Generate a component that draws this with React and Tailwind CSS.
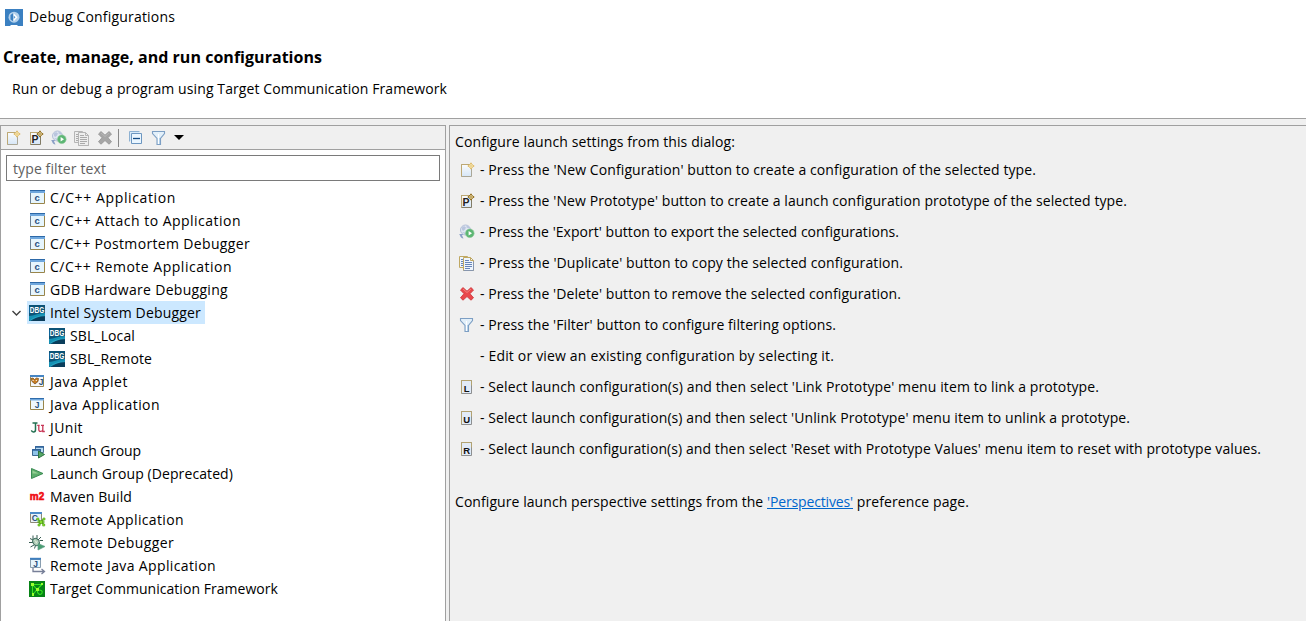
import { useLayoutEffect, useRef, useState } from "react";

/* Text whose tracking is adjusted so that it fills a given width. */
function Fit({ w, children, className = "" }) {
  const ref = useRef(null);
  const [ls, setLs] = useState(0);
  useLayoutEffect(() => {
    const natural = ref.current.getBoundingClientRect().width;
    setLs((w - natural) / ref.current.textContent.length);
  }, []);
  return (
    <span ref={ref} className={"inline-block whitespace-pre " + className} style={{ letterSpacing: ls + "px" }}>
      {children}
    </span>
  );
}

function Svg({ children, box = "0 0 16 16" }) {
  return (
    <svg viewBox={box} className="block h-4 w-4 shrink-0 overflow-visible">
      {children}
    </svg>
  );
}

const G = ({ children, size = 9, x = 8, y = 12, fill = "#222" }) => (
  <text x={x} y={y} fontSize={size} fill={fill} fontWeight={700} textAnchor="middle" fontFamily="Liberation Sans, sans-serif">
    {children}
  </text>
);

function Spark({ dark }) {
  const c = dark ? "#8a6414" : "#dcb866";
  return (
    <>
      <path d="M12 .8 13.300 2.700 15.200 4 13.300 5.300 12 7.200 10.700 5.300 8.800 4 10.700 2.700Z" fill="#fff3c4" stroke={c} strokeWidth=".9" />
      <path d="M12 2v4M10 4h4" stroke={c} strokeWidth=".6" />
    </>
  );
}

function Page({ letter }) {
  return (
    <Svg>
      <defs>
        <linearGradient id="pg" x2="0" y2="1">
          <stop stopColor="#fbfcfc" />
          <stop offset="1" stopColor="#d6e6f7" />
        </linearGradient>
      </defs>
      <path d="M2.500 2.500h10v12h-10Z" fill="url(#pg)" stroke={letter ? "#827c66" : "#aaa797"} />
      <path d="M2.500 14.500v-12H10" fill="none" stroke="#bda873" />
      {letter && <G size={10.500} x={7} y={13}>P</G>}
      <Spark dark={letter} />
    </Svg>
  );
}

function Export() {
  return (
    <Svg>
      <circle cx="6.500" cy="6" r="5" fill="#dfe6f1" stroke="#b3bfd8" />
      <path d="M3 3.500 5 2l2 1.500-1 2-2 1.500-1-1.500Z M7.500 1.500l3 1.500v1.500l-3-1Z M3 8l3 .5v2Z" fill="#b9c5de" />
      <path d="M.2 10h4.300L3 11.300l1.500 3.200C2.500 14.300 1.300 13 1 11.500Z" fill="#8ba0c6" />
      <circle cx="10.800" cy="9.300" r="4.300" fill="#5cb673" stroke="#86c592" strokeWidth=".6" />
      <path d="M9.600 7v4.600l3.400-2.300Z" fill="#fff" />
    </Svg>
  );
}

function Duplicate({ gray }) {
  const a = gray ? "#b5b5b5" : "#c0a862";
  const b = gray ? "#aaa" : "#6785b9";
  const f = gray ? "#eee" : "#eef5fd";
  return (
    <Svg>
      <path d="M.5 1.500h8v11h-8Z" fill={f} stroke={a} />
      <path d="M2 4.500h3M2 6.500h3M2 8.500h3M2 10.500h3" stroke={b} />
      <path d="M4.500 2.500h7l3 3v10h-10Z" fill={f} stroke={a} />
      <path d="M11.500 2.500v3h3" fill="none" stroke={a} />
      <path d="M6 5.500h4M6 7.500h7M6 9.500h7M6 11.500h7M6 13.500h5" fill="none" stroke={b} />
      <path d="M4.500 15.500h10v-9" fill="none" stroke={gray ? "#b5b5b5" : "#8796ae"} />
    </Svg>
  );
}

function Cross({ gray }) {
  return (
    <Svg>
      <path
        d="M4 1.600 8 5.200 12 1.600 14.500 4 11 7.700 14.500 11.800 12 14.200 8 10.500 4 14.200 1.500 11.800 5 7.700 1.500 4Z"
        fill={gray ? "#a6a6a6" : "#e9474b"}
        stroke={gray ? "#999" : "#cf3a3f"}
        strokeLinejoin="round"
        strokeWidth=".9"
      />
      <path d="M4 3 8 6.500 12 3" fill="none" stroke={gray ? "#b8b8b8" : "#f4807c"} />
    </Svg>
  );
}

function Filter() {
  return (
    <Svg>
      <path d="M1.500 1.500h12v2L9.500 8.500v6H6v-6L1.500 3.500Z" fill="#e3f0fa" stroke="#7d9fc4" strokeWidth="1.100" />
      <path d="M7.500 4v10" stroke="#fff" />
      <path d="M8.500 8v6" stroke="#b4d2ec" />
    </Svg>
  );
}

function Collapse() {
  return (
    <Svg>
      <path d="M1.500 11.500v-10h10" fill="none" stroke="#8db1d2" />
      <path d="M2.500 11V2.500h9" fill="none" stroke="#d6eafa" />
      <path d="M3.500 3.500h10v10h-10Z" fill="#eaf6ff" stroke="#6c96c0" />
      <path d="M5 8.500h7" stroke="#134b84" strokeWidth="1.300" />
    </Svg>
  );
}

function Letter({ children }) {
  return (
    <Svg>
      <path d="M2.500 1.500h10v13h-10Z" fill="#e2ebf7" stroke="#8d8f90" />
      <path d="M2.500 14.500v-13h10v5" fill="none" stroke="#b3a370" />
      <G size={9.500} x={7.700} y={13} fill="#111">{children}</G>
    </Svg>
  );
}

function Win({ letter }) {
  return (
    <Svg box="-1 1 16 16">
      <path d="M.5 2.500h14v12H.5Z" fill="#e6f5fd" stroke="#99854a" />
      <path d="M.5 14.500v-12" stroke="#6b8094" />
      <path d="M0 1.500h15" stroke="#2d69a8" />
      <path d="M0 3h15" stroke="#6fa7dd" strokeWidth="2" />
      <G size={9.500} x={7.200} y={12.300} fill="#294f7d">{letter}</G>
    </Svg>
  );
}

function JavaWin() {
  return (
    <Svg box="-1 0 16 16">
      <path d="M.5 2.500h13v10H.5Z" fill="#eef8fd" stroke="#99854a" />
      <path d="M0 1.500h14" stroke="#2d69a8" />
      <path d="M0 2.700h14" stroke="#6fa7dd" strokeWidth="1.500" />
      <G size={8.500} x={7} y={11} fill="#294f7d">J</G>
    </Svg>
  );
}

function Dbg() {
  return (
    <Svg>
      <rect width="16" height="16" fill="#0c5377" />
      <path d="M0 11C5 10.500 9 8.500 16 8v2.500C9 11 5 14 0 16Z" fill="#1591b4" />
      <path d="M3 16c2.500-3 7-4.500 13-4.500V16Z" fill="#0a3d5b" />
      <path d="M1 15.500C5 12.500 10 10.800 16 10.500" fill="none" stroke="#35b5cf" strokeWidth=".6" />
      <text x=".8" y="8.200" fontSize="8.500" fontWeight="700" fill="#fff" textLength="14.400" lengthAdjust="spacingAndGlyphs" fontFamily="Liberation Sans, sans-serif">DBG</text>
    </Svg>
  );
}

function Applet() {
  return (
    <Svg box="-1 0 16 16">
      <path d="M.5 2.500h13v10H.5Z" fill="#f5f8fa" stroke="#a18a53" />
      <path d="M0 2h14" stroke="#4685c3" strokeWidth="2" />
      <path d="M1 4.500 3 4l1.500 1.500L6.500 4l2 .5-.5 3-3 2.500-3-2.500Z" fill="#c97e22" stroke="#704615" strokeWidth=".7" />
      <path d="M2.600 6.500h1M5.800 6.500h1" stroke="#fff" />
      <G size={8.500} x={11} y={11} fill="#294f7d">J</G>
    </Svg>
  );
}

function JUnit() {
  return (
    <Svg box="-1 0 16 16">
      <path d="M2.500 3h5M5.500 3v7c0 2.500-3.800 2.500-4 .3" fill="none" stroke="#247052" strokeWidth="1.500" />
      <path d="M7.200 5.300h2.500M8.800 5.300v4.500c0 2.500 4 2 4-.3V5.300M11 5.300h3M12.800 9v2.500h2" fill="none" stroke="#c83757" strokeWidth="1.300" />
    </Svg>
  );
}

function Group() {
  return (
    <Svg box="-1 0 16 16">
      <path d="M5.500 3.500h8v6h-8Z" fill="#b9dcf3" stroke="#4b7197" />
      <path d="M5 4h9" stroke="#2b619b" strokeWidth="1.500" />
      <path d="M2.500 6.500h8v6h-8Z" fill="#8fc3e9" stroke="#3c6790" />
      <path d="M2 7h9" stroke="#2b619b" strokeWidth="1.500" />
      <path d="M8.500 8v7l6-3.500Z" fill="#56a766" stroke="#2e7543" />
    </Svg>
  );
}

function Play() {
  return (
    <Svg box="-1 0 16 16">
      <path d="M1.500 2.500v10L13 7.500Z" fill="#5fae6d" stroke="#3b8c54" />
      <path d="M2.500 4.500v3h6Z" fill="#98d095" />
    </Svg>
  );
}

function Maven() {
  return (
    <Svg box="-1 0 16 16">
      <text x="-.200" y="11.300" fontSize="10.500" fontWeight="700" fill="#f00b12" stroke="#f00b12" strokeWidth=".6" textLength="14.400" lengthAdjust="spacingAndGlyphs" fontFamily="Liberation Sans, sans-serif">m2</text>
    </Svg>
  );
}

function RemoteApp() {
  return (
    <Svg box="-1 1 16 16">
      <path d="M.5 2.500h11v9H.5Z" fill="#e8f3fb" stroke="#8d8a76" />
      <path d="M0 2h12" stroke="#4d8cc9" strokeWidth="2" />
      <G size={8.500} x={4.800} y={10.300} fill="#294f7d">C</G>
      <path d="M7.500 8l7 6M14 7.500l-5 6.500M7.500 11h7" stroke="#57a81c" strokeWidth="1.600" />
      <path d="M6.800 7h2v2h-2ZM13 7h2v2h-2ZM9.700 9.700h2.600v2.600H9.700ZM12.700 13h2v2h-2ZM8 13h2v2H8Z" fill="#9bf23b" stroke="#4a9d10" strokeWidth=".6" />
    </Svg>
  );
}

function Bug() {
  return (
    <Svg>
      <path d="M4 .5v4M8 0v3.500M1 3.500l4 2M12 2 9 5M0 7.500h4M1.500 12l3.500-2M5.500 13.500l1-3M10.500 5.500H14" fill="none" stroke="#355b50" />
      <ellipse cx="7" cy="7" rx="3" ry="3.800" transform="rotate(-35 7 7)" fill="#abc8b3" stroke="#416f61" />
      <path d="M5.500 5l3.500 4.500M6 8.500l3-3" stroke="#e5f2df" strokeWidth=".8" />
      <path d="M9 8.500v6.500l7-3.500Z" fill="#4b9e72" stroke="#5f9f86" strokeWidth=".7" />
    </Svg>
  );
}

function RemoteJava() {
  return (
    <Svg>
      <path d="M1.500 1.500h10v8h-10Z" fill="#e6f5fd" stroke="#899eb0" />
      <path d="M1 .8h11" stroke="#3f7fbe" strokeWidth="2" />
      <G size={8.500} x={6.500} y={8.800} fill="#294f7d">J</G>
      <path d="M4 10v3.500H15M12.500 11l3 2.500-3 2.500" fill="none" stroke="#777f98" strokeWidth="1.300" />
    </Svg>
  );
}

function Tcf() {
  return (
    <Svg>
      <rect width="16" height="16" fill="#078316" />
      <path d="M3.500 3.500h9.500L8 8.500 3.500 3.500v9M8 8.500l-4 5M9 8c-2 5 3 7 4 4 1-2-1-3-3-3" fill="none" stroke="#35e51f" strokeWidth="1.100" />
      <path d="M2 2h3v3H2ZM12 2h2v2h-2ZM7 7h3v3H7ZM3 12h2v3H3Z" fill="#9aff2e" />
    </Svg>
  );
}

const tree = [
  ["C/C++ Application", 126, <Win letter="c" />],
  ["C/C++ Attach to Application", 191, <Win letter="c" />],
  ["C/C++ Postmortem Debugger", 200, <Win letter="c" />],
  ["C/C++ Remote Application", 182, <Win letter="c" />],
  ["GDB Hardware Debugging", 178, <Win letter="c" />],
  ["Intel System Debugger", 151, <Dbg />, "open"],
  ["SBL_Local", 65, <Dbg />, "child"],
  ["SBL_Remote", 82, <Dbg />, "child"],
  ["Java Applet", 78, <Applet />],
  ["Java Application", 110, <JavaWin />],
  ["JUnit", 33, <JUnit />],
  ["Launch Group", 91, <Group />],
  ["Launch Group (Deprecated)", 183, <Play />],
  ["Maven Build", 82, <Maven />],
  ["Remote Application", 134, <RemoteApp />],
  ["Remote Debugger", 124, <Bug />],
  ["Remote Java Application", 166, <RemoteJava />],
  ["Target Communication Framework", 228, <Tcf />],
];

const help = [
  ["- Press the 'New Configuration' button to create a configuration of the selected type.", 556, <Page />],
  ["- Press the 'New Prototype' button to create a launch configuration prototype of the selected type.", 647, <Page letter />],
  ["- Press the 'Export' button to export the selected configurations.", 419, <Export />],
  ["- Press the 'Duplicate' button to copy the selected configuration.", 423, <Duplicate />],
  ["- Press the 'Delete' button to remove the selected configuration.", 421, <Cross />],
  ["- Press the 'Filter' button to configure filtering options.", 356, <Filter />],
  ["- Edit or view an existing configuration by selecting it.", 354, null],
  ["- Select launch configuration(s) and then select 'Link Prototype' menu item to link a prototype.", 619, <Letter>L</Letter>],
  ["- Select launch configuration(s) and then select 'Unlink Prototype' menu item to unlink a prototype.", 650, <Letter>U</Letter>],
  ["- Select launch configuration(s) and then select 'Reset with Prototype Values' menu item to reset with prototype values.", 781, <Letter>R</Letter>],
];

export default function App() {
  return (
    <div className="flex h-[621px] w-[1306px] flex-col overflow-hidden bg-white font-['Open_Sans','Noto_Sans',sans-serif] text-[14px] leading-[22px] text-black">
      <header className="h-[118px] shrink-0">
        <div className="flex h-[34px] items-center pl-[5px]">
          <svg viewBox="0 0 18 17" className="mr-[6px] block h-[17px] w-[18px]">
            <path d="M0 0h18v17h-5l-1-1H6l-1 1H0Z" fill="#3b80c1" />
            <circle cx="9" cy="8.200" r="5.500" fill="#b4d1ec" />
            <path d="M8.300 4v8.500L5.500 10.500v-4.500Z" fill="#3b80c1" />
            <path d="M8.500 4 12.500 8.200 8.500 12.500Z" fill="#fff" />
            <path d="M8.700 6.500v3.500l1.800-1.800Z" fill="#5a97cf" />
          </svg>
          <Fit w={146}>Debug Configurations</Fit>
        </div>
        <div className="flex h-[46px] items-center pl-[3px] text-[16px] font-bold">
          <Fit w={319}>Create, manage, and run configurations</Fit>
        </div>
        <div className="flex h-[18px] items-center pl-3">
          <Fit w={435}>Run or debug a program using Target Communication Framework</Fit>
        </div>
      </header>
      <div className="flex min-h-0 flex-1 border-t border-[#a0a0a0] bg-[#f0f0f0] pt-[6px]">
        <aside className="flex w-[446px] shrink-0 flex-col border-x border-t border-[#a0a0a0] bg-white">
          <div className="flex h-6 shrink-0 items-center gap-[7px] border-b border-[#a0a0a0] bg-[#f0f0f0] pl-1">
            <Page />
            <Page letter />
            <Export />
            <Duplicate gray />
            <Cross gray />
            <div className="-ml-[2px] mr-[2px] h-[18px] w-px bg-[#888]" />
            <Collapse />
            <Filter />
            <svg viewBox="0 0 10 5" className="block h-[5px] w-[10px]">
              <path d="M0 0h10L5 5Z" fill="#000" />
            </svg>
          </div>
          <div className="mx-[5px] mt-[5px] flex h-[26px] shrink-0 items-center border border-[#7a7a7a] pl-[6px] pt-px text-[#606060]">
            <Fit w={93}>type filter text</Fit>
          </div>
          <div className="flex flex-col pt-[5px]">
            {tree.map(([label, w, icon, kind]) => (
              <div key={label} className={"flex h-[23px] items-center " + (kind === "child" ? "pl-[46px]" : "pl-[10px]")}>
                {kind !== "child" && (
                  <svg viewBox="0 0 10 6" className="mr-[6px] block h-[6px] w-[10px]">
                    {kind === "open" && <path d="M1.500 1l4 4 4-4" fill="none" stroke="#404040" strokeWidth="1.400" />}
                  </svg>
                )}
                <div className={"flex h-[23px] items-center gap-[5px] pl-[2px] pr-1 " + (kind === "open" ? "bg-[#cce8ff]" : "")}>
                  <div className="mt-px">{icon}</div>
                  <Fit w={w}>{label}</Fit>
                </div>
              </div>
            ))}
          </div>
        </aside>
        <main className="ml-[3px] flex min-w-0 flex-1 flex-col border-l border-t border-[#a0a0a0] pl-[5px] pt-[5px]">
          <div className="h-[23px]">
            <Fit w={280}>Configure launch settings from this dialog:</Fit>
          </div>
          {help.map(([label, w, icon]) => (
            <div key={label} className="flex h-[31px] shrink-0 items-center pl-1">
              <div className="mr-[5px] mt-px w-4">{icon}</div>
              <Fit w={w}>{label}</Fit>
            </div>
          ))}
          <div className="mt-[27px] flex">
            <Fit w={312}>{"Configure launch perspective settings from the "}</Fit>
            <Fit w={86} className="text-[#0066cc] underline">'Perspectives'</Fit>
            <Fit w={116}>{" preference page."}</Fit>
          </div>
        </main>
      </div>
    </div>
  );
}
